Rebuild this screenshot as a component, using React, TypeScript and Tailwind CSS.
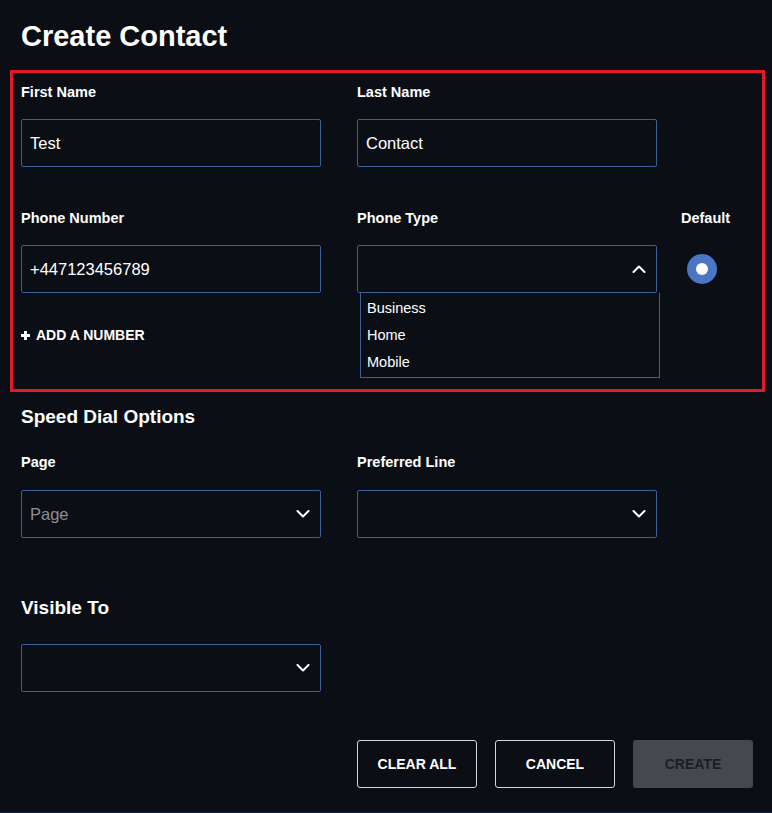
import { useState } from "react";

const font = { fontFamily: '"Liberation Sans", Arial, sans-serif' };

function Chevron({ up = false }: { up?: boolean }) {
  return (
    <svg width="14" height="8" viewBox="0 0 14 8" fill="none" className="shrink-0">
      <path
        d={up ? "M1.5 7L7 1.5 12.5 7" : "M1.5 1L7 6.5 12.5 1"}
        stroke="#ffffff"
        strokeWidth="2"
        strokeLinecap="round"
        strokeLinejoin="round"
      />
    </svg>
  );
}

function Label({ children }: { children: React.ReactNode }) {
  return (
    <div className="text-[14.5px] font-bold leading-[20px] text-white">
      {children}
    </div>
  );
}

function TextField({ value }: { value: string }) {
  return (
    <input
      type="text"
      defaultValue={value}
      className="h-[48px] w-[300px] rounded-[2px] border border-[#3e5f96] bg-transparent px-2 text-[16.5px] text-white outline-none"
    />
  );
}

function SelectBox({
  placeholder,
  open = false,
}: {
  placeholder?: string;
  open?: boolean;
}) {
  return (
    <div className="flex h-[48px] w-[300px] items-center justify-between rounded-[2px] border border-[#3e5f96] pl-2 pr-[10px]">
      <span className="text-[16.5px] text-[#8c8f95]">{placeholder}</span>
      <Chevron up={open} />
    </div>
  );
}

export default function App() {
  const [isDefault] = useState(true);

  return (
    <div
      className="flex h-[813px] w-full flex-col border-b border-[#16223a] bg-[#0b0f15] text-white"
      style={font}
    >
      {/* Title */}
      <h1 className="pl-[21px] pt-[18px] text-[29px] font-bold leading-[36px]">
        Create Contact
      </h1>

      {/* Contact details */}
      <div className="ml-[10px] mt-[16px] w-[755px] border-[3px] border-[#e21c26] pb-[44px] pl-[8px] pt-[9px]">
        <div className="flex gap-[36px]">
          <div className="flex w-[300px] flex-col gap-[17px]">
            <Label>First Name</Label>
            <TextField value="Test" />
          </div>
          <div className="flex w-[300px] flex-col gap-[17px]">
            <Label>Last Name</Label>
            <TextField value="Contact" />
          </div>
        </div>

        <div className="mt-[41px] flex">
          <div className="flex w-[300px] flex-col gap-[17px]">
            <Label>Phone Number</Label>
            <TextField value="+447123456789" />
          </div>
          <div className="ml-[36px] flex w-[300px] flex-col gap-[17px]">
            <Label>Phone Type</Label>
            <div className="relative">
              <SelectBox open />
              <ul className="absolute left-[3px] top-full z-10 w-[300px] border-x border-b border-[#3e5f96] bg-[#0b0f15] pb-[1px] pt-[2px] text-[14.5px] leading-[27px] text-white">
                <li className="pl-[6px]">Business</li>
                <li className="pl-[6px]">Home</li>
                <li className="pl-[6px]">Mobile</li>
              </ul>
            </div>
          </div>
          <div className="ml-[24px] flex flex-col gap-[26px]">
            <Label>Default</Label>
            <div className="ml-[6px] flex h-[30px] w-[30px] items-center justify-center rounded-full bg-[#4a76c4]">
              {isDefault && <div className="h-[12px] w-[12px] rounded-full bg-white" />}
            </div>
          </div>
        </div>

        <button className="mt-[32px] flex h-[20px] items-center gap-[6px] text-[14px] font-bold uppercase leading-[20px] text-white">
          <svg width="9" height="9" viewBox="0 0 9 9" fill="#ffffff">
            <rect x="3" y="0" width="3" height="9" />
            <rect x="0" y="3" width="9" height="3" />
          </svg>
          Add a number
        </button>
      </div>

      {/* Speed dial */}
      <div className="pl-[21px]">
        <h2 className="mt-[13px] text-[19px] font-bold leading-[24px]">
          Speed Dial Options
        </h2>
        <div className="mt-[23px] flex gap-[36px]">
          <div className="flex w-[300px] flex-col gap-[18px]">
            <Label>Page</Label>
            <SelectBox placeholder="Page" />
          </div>
          <div className="flex w-[300px] flex-col gap-[18px]">
            <Label>Preferred Line</Label>
            <SelectBox />
          </div>
        </div>

        <h2 className="mt-[58px] text-[19px] font-bold leading-[24px]">
          Visible To
        </h2>
        <div className="mt-[24px]">
          <SelectBox />
        </div>
      </div>

      {/* Actions */}
      <div className="mt-[48px] flex justify-end gap-[18px] pr-[19px]">
        <button className="h-[48px] w-[120px] rounded-[3px] border border-[#d4d6da] text-[14px] font-bold text-white">
          CLEAR ALL
        </button>
        <button className="h-[48px] w-[120px] rounded-[3px] border border-[#d4d6da] text-[14px] font-bold text-white">
          CANCEL
        </button>
        <button
          disabled
          className="h-[48px] w-[120px] rounded-[3px] bg-[#45484e] text-[14px] font-bold text-[#1b1e24]"
        >
          CREATE
        </button>
      </div>
    </div>
  );
}
